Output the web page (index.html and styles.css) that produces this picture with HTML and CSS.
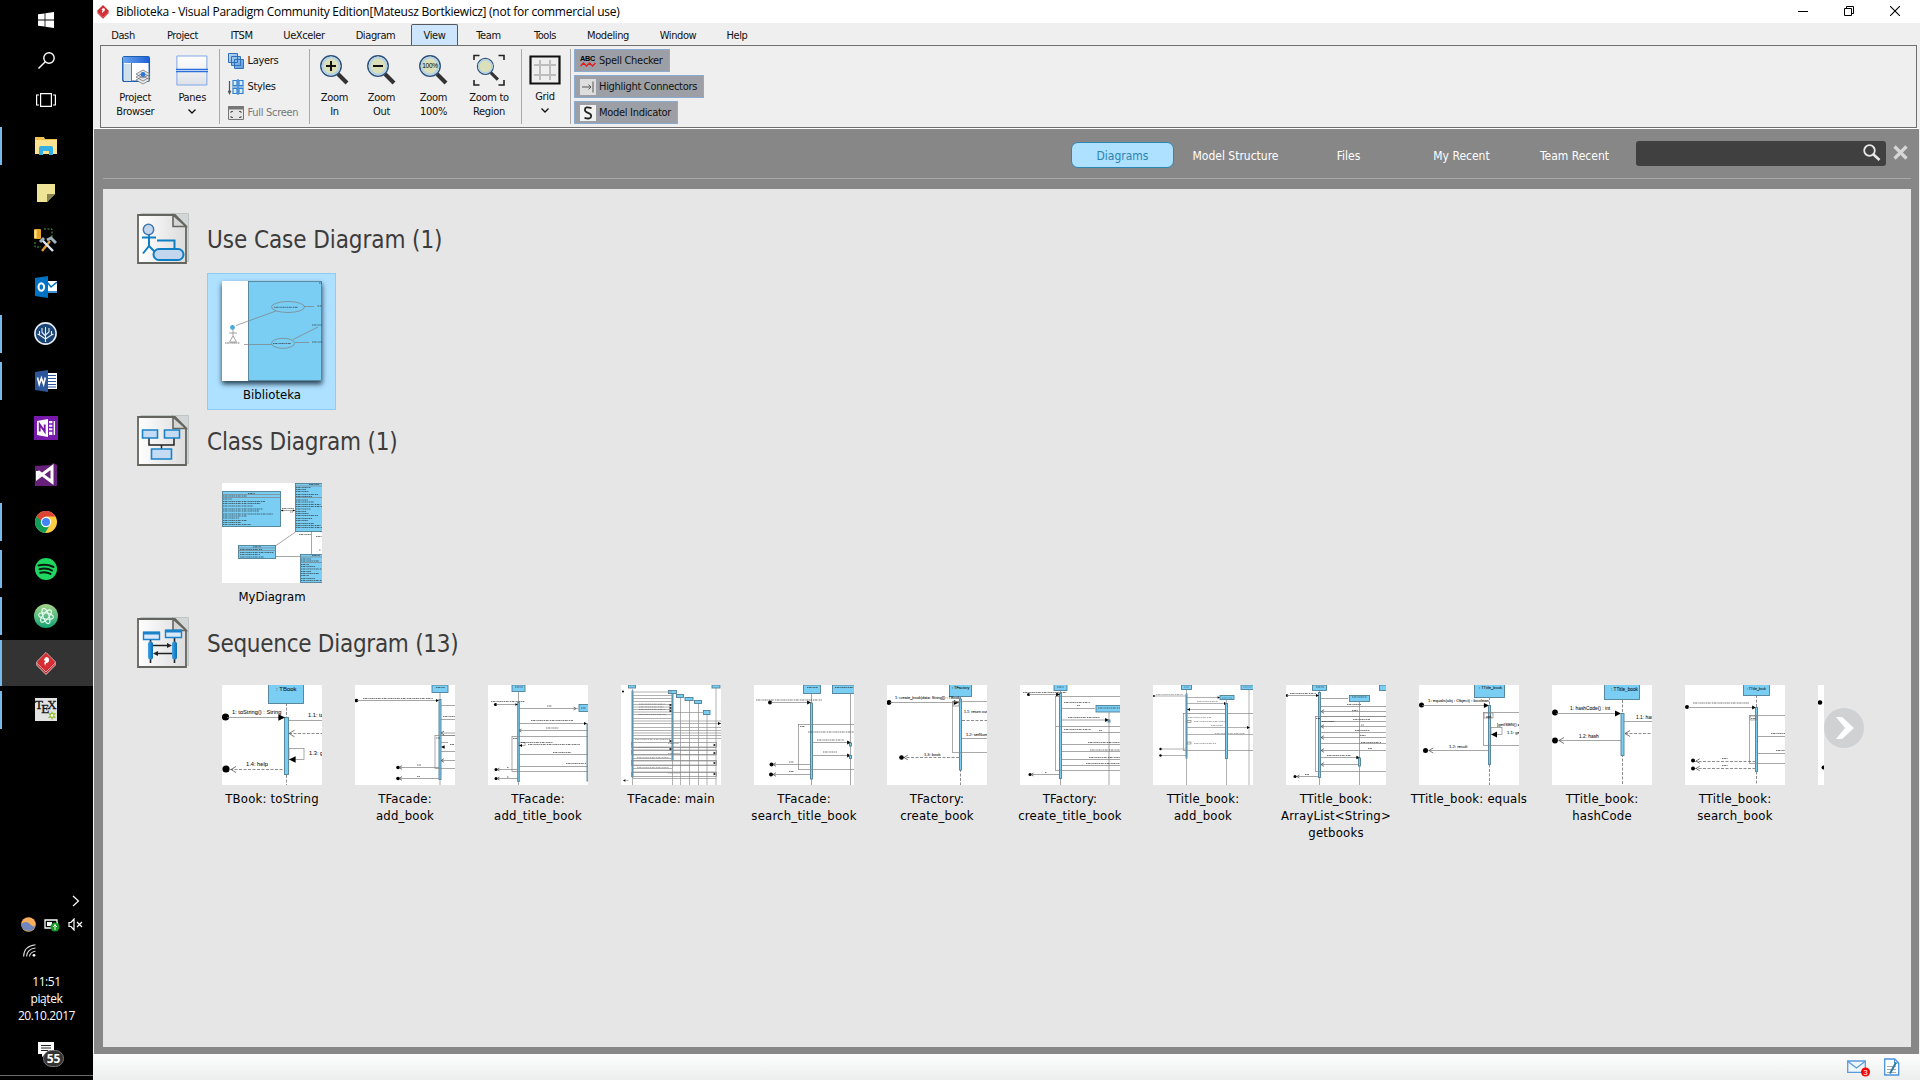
FILE: index.html
```html
<!DOCTYPE html>
<html lang="en">
<head>
<meta charset="utf-8">
<title>Biblioteka - Visual Paradigm</title>
<link rel="stylesheet" href="styles.css">
</head>
<body>
<svg class="defs" width="0" height="0">
  <defs>
    <linearGradient id="page" x1="0" x2="1"><stop offset="0" stop-color="#fff"/><stop offset="1" stop-color="#dcdcdc"/></linearGradient>
    <linearGradient id="pane" x1="0" y1="0" x2="0" y2="1"><stop offset="0" stop-color="#fff"/><stop offset="1" stop-color="#dde1e8"/></linearGradient>
    <linearGradient id="blue" x1="0" x2="1"><stop offset="0" stop-color="#6aa6ee"/><stop offset="1" stop-color="#1f62d8"/></linearGradient>
    <linearGradient id="layer" x1="0" y1="0" x2="1" y2="1"><stop offset="0" stop-color="#b9d8f5"/><stop offset="1" stop-color="#5a9be0"/></linearGradient>
    <linearGradient id="atomg" x1="0" y1="0" x2="0" y2="1"><stop offset="0" stop-color="#a6d68c"/><stop offset="1" stop-color="#12a374"/></linearGradient>
    <linearGradient id="bar" x1="0" x2="1"><stop offset="0" stop-color="#3fa3e4"/><stop offset="1" stop-color="#0a6cb4"/></linearGradient>
    <symbol id="vp" viewBox="0 0 24 26">
      <path d="M12 1 22 11v4L12 25 2 15v-4Z" fill="#c9252b" stroke="#e8d8d8" stroke-width="1"/>
      <path d="M2.500 13 12 22.300 21.500 13" fill="none" stroke="#f1b5b5" stroke-width="1"/>
      <path d="M12 1.500 21.500 11 12 20.500 2.500 11Z" fill="#d32f35"/>
      <path d="M12 6a3.300 3.300 0 1 1 0 6.600l-1 2.900-1-3.500 1.500-1.500L9.500 9Z" fill="#fff"/>
    </symbol>
    <symbol id="lens" viewBox="0 0 32 32">
      <path d="m19 20 9 9" stroke="#333" stroke-width="4"/>
      <circle cx="12" cy="12" r="10.200" fill="#dce0b8" stroke="#2d5078" stroke-width="1.500"/>
      <circle cx="12" cy="12" r="8.500" fill="none" stroke="#b3d2ea" stroke-width="2"/>
    </symbol>
    <symbol id="sheet" viewBox="0 0 52 52">
      <path d="M4 .5h47.500v48H4Z" fill="#d3d6d6" stroke="#bfc4c4"/>
      <path d="M1 2h37l11 11v37H1Z" fill="url(#page)" stroke="#65655f" stroke-width="1.800"/>
      <path d="M36 2v11.500h13Z" fill="#d5d5d5" stroke="#65655f" stroke-width="1.600"/>
    </symbol>
  </defs>
</svg>

<div class="desktop">
  <aside class="taskbar">
    <div class="tb-top">
      <div class="sys"><svg width="16" height="16" viewBox="0 0 16 16" fill="#fff"><path d="M0 2.300 6.600 1.400v6.200H0ZM7.400 1.300 16 0v7.600H7.400ZM0 8.400h6.600v6.200L0 13.700ZM7.400 8.400H16V16l-8.600-1.300Z"/></svg></div>
      <div class="sys"><svg width="17" height="17" viewBox="0 0 17 17" fill="none" stroke="#fff" stroke-width="1.400"><circle cx="11" cy="6" r="5.200"/><path d="M7.300 9.700.5 16.500"/></svg></div>
      <div class="sys"><svg width="20" height="16" viewBox="0 0 20 16" fill="none" stroke="#fff" stroke-width="1.200"><path d="M4.600 1.600h10.800v12.800H4.600ZM3 3H.6v10H3M17 3h2.400v10H17"/></svg></div>
    </div>
    <div class="app open"><svg width="22" height="20" viewBox="0 0 22 20"><path d="M0 1h9l1 2h12v15H0Z" fill="#f2c14e"/><path d="M0 4h22v14H0Z" fill="#fee391"/><path d="M4 19v-7q0-2 2-2h10q2 0 2 2v7h-4v-4H8v4Z" fill="#35b0e4"/></svg></div>
    <div class="app"><svg width="18" height="18" viewBox="0 0 18 18"><path d="M0 0h18v10l-8 8H0Z" fill="#efe395"/><path d="M10 10h8l-8 8Z" fill="#8a8350"/></svg></div>
    <div class="app"><svg width="23" height="24" viewBox="0 0 23 24"><rect width="7" height="10" y="1" rx="1" fill="#e9a72a"/><path d="M1.500 2v8" stroke="#ffe6a0" stroke-width="2"/><path d="M10 1h8v8M1 14v5h6" fill="none" stroke="#46a83f" stroke-dasharray="2 1.500"/><path d="m8 23 8-10" stroke="#dd9b30" stroke-width="2.400"/><path d="m8 12 11 11" stroke="#dfe6ee" stroke-width="2.400"/><path d="m13 12 4-2 5 5M6 14l4-4" fill="none" stroke="#9fb0bf" stroke-width="3"/></svg></div>
    <div class="app"><svg width="22" height="22" viewBox="0 0 22 22"><path d="M12 5h10v12H12Z" fill="#fff"/><path d="m12 6 4 5 6-5M13 16h9" fill="none" stroke="#0072c6" stroke-width="1.500"/><path d="M0 2 13 0v22L0 20Z" fill="#0072c6"/><ellipse cx="6.300" cy="11" rx="2.800" ry="3.800" fill="none" stroke="#fff" stroke-width="2"/></svg></div>
    <div class="app open"><svg width="23" height="23" viewBox="0 0 23 23"><circle cx="11.500" cy="11.500" r="10.600" fill="#1b4577" stroke="#e8eef5" stroke-width="1.600"/><path d="M11.500 20V5M11.500 17 5.500 13V9M11.500 14 8 10.500V6M11.500 17l6-4V9M11.500 13l3.500-3V6M5.500 13l-2-1M17.500 13l2-1" fill="none" stroke="#e8eef5" stroke-width="1.100"/></svg></div>
    <div class="app open"><svg width="22" height="22" viewBox="0 0 22 22"><path d="M12 3h10v16H12Z" fill="#fff"/><path d="M13 5.500h8M13 8.500h8M13 11.500h8M13 14.500h8M13 17h8" stroke="#2b579a"/><path d="M0 2 13 0v22L0 20Z" fill="#2b579a"/><path d="m2.500 7.500 1.700 7 2.200-6.500 2.200 6.500 1.700-7" fill="none" stroke="#fff" stroke-width="1.600"/></svg></div>
    <div class="app"><svg width="24" height="24" viewBox="0 0 24 24"><path d="M0 0h24v24H0Z" fill="#7719aa"/><path d="m3 5 11-2v18L3 19ZM15 5h6v14h-6Z" fill="#fff"/><path d="M5.700 15.500v-7l5 7v-7" fill="none" stroke="#7719aa" stroke-width="1.900"/><path d="M15 8h4M15 11.500h4M15 15h4M19 5v14" stroke="#7719aa" stroke-width="1.300"/></svg></div>
    <div class="app"><svg width="22" height="23" viewBox="0 0 22 23"><path d="M0 3 16 2l2-2 4 2v21H0Z" fill="#68217a"/><path d="M2.500 8v7L17 4v15L3 8.500M3 14.500l4-3" fill="none" stroke="#fff" stroke-width="3"/></svg></div>
    <div class="app open"><svg width="22" height="22" viewBox="0 0 22 22"><circle cx="11" cy="11" r="11" fill="#ffcd40"/><path d="M1.500 5.500A11 11 0 0 0 10 22l5.500-9H11Z" fill="#0f9d58"/><path d="M1.500 5.500A11 11 0 0 1 20.500 5.500H11L6 9.500Z" fill="#db4437"/><circle cx="11" cy="11" r="5.200" fill="#fff"/><circle cx="11" cy="11" r="4" fill="#4285f4"/></svg></div>
    <div class="app open"><svg width="22" height="22" viewBox="0 0 22 22"><circle cx="11" cy="11" r="11" fill="#1ed760"/><path d="M3.500 7.500q8-2.200 15 1.500M4.500 11.200q7-1.800 12.500 1.300M5.200 14.700q6-1.400 10.300 1.200" fill="none" stroke="#0b1a10" stroke-width="2" stroke-linecap="round"/></svg></div>
    <div class="app open"><svg width="24" height="24" viewBox="0 0 24 24"><circle cx="12" cy="12" r="12" fill="url(#atomg)"/><g fill="none" stroke="#e9fff4" stroke-width="1"><ellipse cx="12" cy="12" rx="3" ry="8" transform="rotate(-20 12 12)"/><ellipse cx="12" cy="12" rx="3" ry="7.500" transform="rotate(40 12 12)"/><ellipse cx="12" cy="12" rx="3" ry="7.500" transform="rotate(100 12 12)"/></g></svg></div>
    <div class="app open active"><svg width="22" height="25"><use href="#vp"/></svg></div>
    <div class="app open"><svg class="spill" width="22" height="23" viewBox="0 0 22 23"><path d="M0 0h22v23H0Z" fill="#e3e3e3"/><g font-family="Liberation Serif, serif" font-size="13" fill="#111" stroke="#111" stroke-width=".3"><text x="0" y="11">T</text><text x="6.300" y="14.500">E</text><text x="12.300" y="11">X</text></g><path d="m17 13 1 2.500 3-.5-2 2.500 2 2.500-3-.5-1 2.500-1-2.500-3 .5 2-2.500-2-2.500 3 .5Z" fill="#86b817"/><circle cx="17" cy="17.500" r="1.400" fill="#fff"/></svg></div>

    <div class="tray">
      <div class="tray-more"><svg width="8" height="12" viewBox="0 0 8 12" fill="none" stroke="#fff" stroke-width="1.200"><path d="m1 1 5.500 5L1 11"/></svg></div>
      <div class="tray-row">
        <svg width="15" height="15" viewBox="0 0 15 15"><circle cx="7.500" cy="7.500" r="7.300" fill="#f6b05c"/><path d="M.3 7q5-4 9 .5 2 2 5 2A7.300 7.300 0 0 1 .3 7Z" fill="#6f87bd"/></svg>
        <svg width="16" height="14" viewBox="0 0 16 14"><path d="M1 2h12v8H1ZM13.500 4.500v3" fill="none" stroke="#fff" stroke-width="1.300"/><path d="M3 4h5v4H3Z" fill="#fff"/><circle cx="11" cy="9" r="4.500" fill="#159a22"/><path d="M11 6v6M9 9l2-2 2 2" fill="none" stroke="#fff"/></svg>
        <svg width="15" height="13" viewBox="0 0 15 13" fill="none" stroke="#fff" stroke-width="1.200"><path d="M1 4.500h2l3-3.500v11L3 8.500H1Z"/><path d="m9 4 5 5M14 4 9 9"/></svg>
      </div>
      <div class="tray-wifi"><svg width="13" height="13" viewBox="0 0 13 13" fill="none" stroke="#ddd" stroke-width="1.100"><path d="M.6 12.500Q1 2 12.500.8M3.500 12.500Q4 5 12.500 4M6.500 12.500Q7 8 12.500 7.200"/><circle cx="11" cy="11.300" r="1.400" fill="#fff" stroke="none"/></svg></div>
      <div class="clock"><span>11:51</span><span>piątek</span><span>20.10.2017</span></div>
      <div class="notes"><svg width="16" height="15" viewBox="0 0 16 15"><path d="M0 0h16v12H8l-4 3v-3H0Z" fill="#fff"/><path d="M3 3.500h10M3 6h10M3 8.500h7" stroke="#222"/></svg><b class="count">55</b></div>
    </div>
  </aside>

  <main class="window">
    <header class="titlebar">
      <svg width="14" height="16"><use href="#vp"/></svg>
      <h1>Biblioteka - Visual Paradigm Community Edition[Mateusz Bortkiewicz] (not for commercial use)</h1>
      <div class="controls">
        <svg width="10" height="10" viewBox="0 0 10 10"><path d="M0 5.500h10" stroke="#000"/></svg>
        <svg width="10" height="10" viewBox="0 0 10 10" fill="none" stroke="#000"><path d="M.5 2.500h7v7h-7ZM2.500 2.500v-2h7v7h-2"/></svg>
        <svg width="10" height="10" viewBox="0 0 10 10" fill="none" stroke="#000" stroke-width="1.100"><path d="m0 0 10 10M10 0 0 10"/></svg>
      </div>
    </header>

    <nav class="menu">
      <span>Dash</span><span>Project</span><span>ITSM</span><span>UeXceler</span><span>Diagram</span><span class="current">View</span><span>Team</span><span>Tools</span><span>Modeling</span><span>Window</span><span>Help</span>
    </nav>

    <section class="ribbon">
      <div class="group panels">
        <div class="tool"><svg width="32" height="32" viewBox="0 0 32 32"><rect x="3.800" y="2.800" width="26.500" height="24.500" rx="1.500" fill="#fff" stroke="#1d5fae" stroke-width="1.500"/><path d="M4 3h26v6H4Z" fill="url(#blue)"/><path d="M5 10h7v17H5Z" fill="#cfe0ea"/><path d="M12.500 9v18.500" stroke="#5d7c8c"/><path d="m17 26 7-4 7 4-7 4ZM17 23l7-4 7 4-7 4ZM17 20l7-4 7 4-7 4Z" fill="#e6e8ea" stroke="#777" stroke-width=".8"/><circle cx="24" cy="20.500" r="2.400" fill="#2c77d8"/></svg><span>Project<br>Browser</span></div>
        <div class="tool"><svg width="32" height="32" viewBox="0 0 32 32"><g fill="url(#pane)" stroke="#7fa6e8"><path d="M.9 2h30v13.500H.9ZM.9 17.500h30V31H.9Z"/></g><path d="M0 15.500h32M0 17.700h32" stroke="#2a6fdc" stroke-width="1.300"/></svg><span>Panes</span><svg class="chev" width="8" height="5" viewBox="0 0 8 5"><path d="m.5.500 3.500 3.500L7.500.5"/></svg></div>
      </div>
      <div class="group views">
        <div class="item"><svg width="16" height="16" viewBox="0 0 16 16" fill="url(#layer)" stroke="#2f70b8"><path d="M.5.500h9v9h-9ZM3.500 3.500h9v9h-9ZM6.500 6.500h9v9h-9Z"/></svg><span>Layers</span></div>
        <div class="item"><svg width="16" height="16" viewBox="0 0 16 16" fill="none" stroke="#2f80d0" stroke-width="1.200"><path d="M1.500 2v12M.200 11.800 1.500 14.500l1.300-2.700" stroke="#555"/><path d="M5 1.500h4v5H5ZM11 1.500h4v5h-4ZM5 9.500h4v5H5ZM11 9.500h4v5h-4Z" fill="#d9edfb"/><path d="M4 8h12M10 0v16"/></svg><span>Styles</span></div>
        <div class="item off"><svg width="16" height="14" viewBox="0 0 16 14" fill="none" stroke="#777"><path d="M.5.500h15v13H.5Z" fill="#e6e6e6"/><path d="M0 2h16" stroke-width="3"/><path d="M3 7V5.500h2M11 5.500h2V7M13 10v1.500h-2M5 11.500H3V10" stroke="#555"/></svg><span>Full Screen</span></div>
      </div>
      <div class="group zooms">
        <div class="tool"><svg width="32" height="32" viewBox="0 0 32 32"><use href="#lens"/><path d="M7 12h10M12 7v10" stroke="#111" stroke-width="2"/></svg><span>Zoom<br>In</span></div>
        <div class="tool"><svg width="32" height="32" viewBox="0 0 32 32"><use href="#lens"/><path d="M7 12h10" stroke="#111" stroke-width="2"/></svg><span>Zoom<br>Out</span></div>
        <div class="tool"><svg width="32" height="32" viewBox="0 0 32 32"><use href="#lens"/><text x="12" y="14.300" text-anchor="middle" font-family="Liberation Sans, sans-serif" font-size="6.500">100%</text></svg><span>Zoom<br>100%</span></div>
        <div class="tool"><svg width="32" height="32" viewBox="0 0 32 32"><use href="#lens" x="3" y="3" width="25" height="25"/><path d="M1 6V1.500h5.500M25.500 1.500H31V6M31 26v5h-5.500M6.500 31H1v-5" fill="none" stroke="#222" stroke-width="1.600"/></svg><span>Zoom to<br>Region</span></div>
      </div>
      <div class="group grid">
        <div class="tool"><svg width="32" height="30" viewBox="0 0 32 30"><path d="M1.500 1.500h29v27h-29Z" fill="#eee" stroke="#111" stroke-width="2.200"/><path d="M11 5v20M21 5v20M5 10h22M5 20h22" stroke="#bdbdbd" stroke-width="2"/></svg><span>Grid</span><svg class="chev" width="8" height="5" viewBox="0 0 8 5"><path d="m.5.500 3.500 3.500L7.500.5"/></svg></div>
      </div>
      <div class="toggles">
        <div class="toggle"><svg width="16" height="14" viewBox="0 0 16 14"><text x="0" y="7" font-family="Liberation Sans, sans-serif" font-weight="700" font-size="7" textLength="15" lengthAdjust="spacingAndGlyphs">ABC</text><path d="m.5 12 3-3 3 3 3-3 3 3 3-3" fill="none" stroke="#e02020" stroke-width="1.500"/></svg><span>Spell Checker</span></div>
        <div class="toggle"><svg width="16" height="16" viewBox="0 0 16 16"><path d="M0 0h16v16H0Z" fill="#dedede"/><path d="M2 8h9M8.500 5.500 11 8l-2.500 2.500M13 2.500v11" fill="none" stroke="#555"/></svg><span>Highlight Connectors</span></div>
        <div class="toggle"><svg width="16" height="16" viewBox="0 0 16 16"><path d="M0 0h16v16H0Z" fill="#f2f2f2"/><path d="M11.500 3.200Q5 1 4.900 4.700q0 2.100 3.100 3.100 3.400 1.100 3.200 3.400-.4 3.500-6.700 1.700" fill="none" stroke="#222" stroke-width="1.800"/></svg><span>Model Indicator</span></div>
      </div>
    </section>

    <section class="explorer">
      <div class="filters">
        <div class="tabs"><span class="on">Diagrams</span><span>Model Structure</span><span>Files</span><span>My Recent</span><span>Team Recent</span></div>
        <div class="search"><svg width="18" height="17" viewBox="0 0 18 17" fill="none" stroke="#e8e8e8"><circle cx="6.500" cy="6.500" r="5.300" stroke-width="1.800"/><path d="m10.500 10.500 6 5.500" stroke-width="2.600"/></svg></div>
        <svg class="close" width="15" height="15" viewBox="0 0 15 15" stroke="#d6d6d6" stroke-width="3.200"><path d="m1.500 1.500 12 12M13.500 1.500l-12 12"/></svg>
      </div>

      <div class="board">
        <section class="kind">
          <h2><svg width="52" height="52" viewBox="0 0 52 52"><use href="#sheet"/><g fill="none" stroke="#0f7fc4" stroke-width="2"><path d="M5 24.500h14M12 22v11l-6 7.500M12 33l6 6M20 27.500h17.500V36"/><circle cx="11.500" cy="16.500" r="5.200" fill="#c2d7ef" stroke="#4479a8" stroke-width="1.500"/><rect x="16.500" y="36" width="30" height="11" rx="5.500" fill="#c2d7ef"/></g></svg><span class="wide">Use Case Diagram (1)</span></h2>
          <div class="cards">
            <figure class="card selected"><svg class="thumb" data-diagram="usecase" viewBox="0 0 100 100"></svg><figcaption>Biblioteka</figcaption></figure>
          </div>
        </section>
        <section class="kind">
          <h2><svg width="52" height="52" viewBox="0 0 52 52"><use href="#sheet"/><path d="M12 23v7h25v-7M24.500 30v4" fill="none" stroke="#222" stroke-width="1.500"/><path d="M5.500 15h15v8h-15ZM27.500 15h15v8h-15ZM14.500 34h20v10h-20Z" fill="#c5dbf3" stroke="#1982c8" stroke-width="1.600"/></svg><span>Class Diagram (1)</span></h2>
          <div class="cards">
            <figure class="card"><svg class="thumb" data-diagram="classes" viewBox="0 0 100 100"></svg><figcaption>MyDiagram</figcaption></figure>
          </div>
        </section>
        <section class="kind">
          <h2><svg width="52" height="52" viewBox="0 0 52 52"><use href="#sheet"/><path d="M13.500 23v23M37.500 21v25" stroke="#222" stroke-width="1.600"/><path d="M6.500 15.500h16v7h-16ZM28.500 13.500h16v7h-16Z" fill="#d9e8f8" stroke="#1982c8" stroke-width="1.400"/><path d="M6 14.500h17v3H6ZM28 12.500h17v3H28Z" fill="#1982c8"/><rect x="11" y="24.500" width="5" height="18" rx="2.500" fill="url(#bar)"/><rect x="35" y="24.500" width="5" height="18" rx="2.500" fill="url(#bar)"/><path d="M16 28.500h15M20 36.500h15" stroke="#222" stroke-width="1.500"/><path d="m30 26 5 2.500-5 2.500ZM21 34l-5 2.500 5 2.500Z" fill="#222"/></svg><span class="tight">Sequence Diagram (13)</span></h2>
          <div class="strip">
            <div class="cards">
              <figure class="card"><svg class="thumb" data-diagram="toString" viewBox="0 0 100 100"></svg><figcaption>TBook: toString</figcaption></figure>
              <figure class="card"><svg class="thumb" data-diagram="addBook" viewBox="0 0 100 100"></svg><figcaption>TFacade:<br>add_book</figcaption></figure>
              <figure class="card"><svg class="thumb" data-diagram="addTitle" viewBox="0 0 100 100"></svg><figcaption>TFacade:<br>add_title_book</figcaption></figure>
              <figure class="card"><svg class="thumb dense" data-diagram="main" viewBox="0 0 100 100"></svg><figcaption>TFacade: main</figcaption></figure>
              <figure class="card"><svg class="thumb" data-diagram="searchTitle" viewBox="0 0 100 100"></svg><figcaption>TFacade:<br>search_title_book</figcaption></figure>
              <figure class="card"><svg class="thumb" data-diagram="createBook" viewBox="0 0 100 100"></svg><figcaption>TFactory:<br>create_book</figcaption></figure>
              <figure class="card"><svg class="thumb" data-diagram="createTitle" viewBox="0 0 100 100"></svg><figcaption>TFactory:<br>create_title_book</figcaption></figure>
              <figure class="card"><svg class="thumb dense" data-diagram="titleAdd" viewBox="0 0 100 100"></svg><figcaption>TTitle_book:<br>add_book</figcaption></figure>
              <figure class="card"><svg class="thumb" data-diagram="getbooks" viewBox="0 0 100 100"></svg><figcaption>TTitle_book:<br>ArrayList&lt;String&gt;<br>getbooks</figcaption></figure>
              <figure class="card"><svg class="thumb" data-diagram="equals" viewBox="0 0 100 100"></svg><figcaption>TTitle_book: equals</figcaption></figure>
              <figure class="card"><svg class="thumb" data-diagram="hashCode" viewBox="0 0 100 100"></svg><figcaption>TTitle_book:<br>hashCode</figcaption></figure>
              <figure class="card"><svg class="thumb" data-diagram="searchBook" viewBox="0 0 100 100"></svg><figcaption>TTitle_book:<br>search_book</figcaption></figure>
              <figure class="card"><svg class="thumb" data-diagram="next" viewBox="0 0 100 100"></svg></figure>
            </div>
            <svg class="forward" width="40" height="40" viewBox="0 0 40 40"><circle cx="20" cy="20" r="20" fill="#d0d1d3"/><path d="M12 9h6l12 11-12 11h-6l9-11Z" fill="#fff"/></svg>
          </div>
        </section>
      </div>
    </section>

    <footer class="status">
      <svg width="24" height="20" viewBox="0 0 24 20"><path d="M.7 3h17.600v11.300H.7Z" fill="#eef5fb" stroke="#5a9bdc" stroke-width="1.300"/><path d="m1 3.500 8.500 6.500L18 3.500" fill="none" stroke="#5a9bdc" stroke-width="1.300"/><circle cx="18.500" cy="14" r="4.500" fill="#f00"/><text x="18.500" y="17" text-anchor="middle" font-family="Liberation Sans, sans-serif" font-size="8" fill="#fff">3</text></svg>
      <svg width="16" height="18" viewBox="0 0 16 18"><path d="M.7 1h10l4 4v12H.7Z" fill="#fff" stroke="#4a93dd" stroke-width="1.300"/><path d="M10.500 1v4h4" fill="none" stroke="#4a93dd"/><path d="M3 8.500h9M3 11.500h9M3 14.500h9" stroke="#aaa"/><path d="m6 15.500 6-11" stroke="#2a7f9e" stroke-width="2"/></svg>
    </footer>
  </main>
</div>
<script src="diagrams.js"></script>
</body>
</html>
```
FILE: styles.css
```css
* { box-sizing: border-box; }
body {
  margin: 0;
  overflow: hidden;
  background: #000;
  color: #111;
  font-family: "DejaVu Sans Condensed", "DejaVu Sans", sans-serif;
  font-stretch: condensed;
  font-size: 11px;
}
h1, h2, figure { margin: 0; font-weight: 400; }
svg { display: block; flex: none; }
.spill { overflow: visible; }
.defs { position: absolute; }
.desktop { display: flex; width: 1920px; height: 1080px; }

/* Taskbar */
.taskbar { display: flex; flex-direction: column; width: 93px; background: #000; color: #fff; }
.tb-top { height: 122px; flex: none; }
.sys { display: flex; align-items: center; justify-content: center; height: 40px; width: 92px; }
.app { display: flex; align-items: center; justify-content: center; height: 47px; flex: none; position: relative; padding-right: 2px; }
.app.open::before { content: ""; position: absolute; left: 0; top: 5px; width: 2px; height: 38px; background: #76b9ed; }
.app.active { height: 46px; margin-top: 1px; background: #333; }
.app.active::before { top: 0; height: 46px; }
.tray { margin-top: auto; height: 186px; margin-bottom: 4px; border-bottom: 1px solid #6b6b6b; font-family: "Open Sans", sans-serif; font-stretch: normal; }
.tray-more { display: flex; justify-content: flex-end; padding: 5px 13px 0 0; }
.tray-row { display: flex; align-items: center; gap: 8px; padding: 9px 0 0 21px; height: 26px; }
.tray-wifi { padding: 11px 0 0 23px; }
.clock { display: flex; flex-direction: column; align-items: center; margin-top: 16px; font-size: 12px; line-height: 17px; letter-spacing: -.4px; }
.notes { position: relative; margin: 18px 0 0 38px; width: 26px; height: 28px; }
.count { position: absolute; left: 5px; top: 8px; width: 21px; height: 17px; border: 1px solid #777; border-radius: 9px; background: #333; font-size: 12px; line-height: 15px; text-align: center; }

/* Window frame */
.window { flex: 1; display: flex; flex-direction: column; background: #efefef; border-left: 1px solid #f4f4f4; min-width: 0; }
.titlebar { display: flex; align-items: center; height: 23px; background: #fff; padding-left: 2px; }
.titlebar h1 { margin: 1px 0 0 6px; font: 12px "Open Sans", sans-serif; line-height: 20px; letter-spacing: -.255px; color: #000; }
.controls { display: flex; gap: 36px; margin: -2px 20px 0 auto; }
.menu { display: grid; grid-template-columns: 54px 65px 53px 72px 71px 47px 61px 52px 74px 66px 52px; height: 22px; padding: 1px 0 0 2px; letter-spacing: -.4px; }
.menu span { display: flex; align-items: center; justify-content: center; padding-top: 2px; }
.menu .current { background: #cde6fd; border: 1px solid #55595e; border-bottom: 0; border-radius: 2px 2px 0 0; padding-top: 1px; }

/* Ribbon */
.ribbon { display: flex; height: 83px; margin: 0 3px 0 6px; padding: 3px 0; border: 1px solid #6f6f6f; letter-spacing: -.3px; }
.group { display: flex; border-right: 1px solid #a9a9a9; height: 75px; }
.tool { display: flex; flex-direction: column; align-items: center; text-align: center; line-height: 14px; padding-top: 5px; }
.tool span { margin-top: 5px; }
.chev { fill: none; stroke: #111; stroke-width: 1.300; margin-top: 4px; }
.panels { width: 119px; padding-left: 6px; }
.panels .tool { width: 58px; }
.panels .tool + .tool { width: 55px; margin-left: 2px; }
.views { width: 90px; flex-direction: column; padding-left: 8px; }
.item { display: flex; flex: none; align-items: center; gap: 3px; height: 26px; padding-bottom: 3px; }
.item.off { color: #777; }
.item span { margin-left: .5px; }
.zooms { width: 212px; padding-left: 1px; }
.zooms .tool { width: 47px; }
.zooms .tool:nth-child(3) { width: 57px; }
.zooms .tool:nth-child(4) { width: 54px; }
.grid { width: 49px; }
.grid .tool { width: 46px; padding-top: 6px; }
.toggles { display: flex; flex-direction: column; align-items: flex-start; gap: 3px; padding-left: 3px; }
.toggle { display: flex; align-items: center; gap: 3px; height: 23px; padding: 0 6px 0 5px; background: #9ca0a6; border: 1px solid #8cabd0; }

/* Explorer */
.explorer { height: 925px; margin: 1px 1px 0 0; padding: 0 8px 7px 9px; background: #878787; box-shadow: 0 -1px #fff; }
.filters { display: flex; align-items: flex-start; justify-content: flex-end; height: 50px; padding: 12px 3px 0 0; border-bottom: 1px solid #a8a8a8; }
.tabs { display: flex; gap: 10px; margin: 1px 10px 0 0; font-size: 12px; color: #fff; }
.tabs span { display: flex; align-items: center; justify-content: center; width: 103px; height: 26px; padding-top: 1px; white-space: nowrap; }
.tabs .on { background: #aee0ff; color: #2b84ae; border: 1px solid #2e86b4; border-radius: 7px; }
.search { display: flex; align-items: flex-start; justify-content: flex-end; width: 250px; height: 25px; padding: 3px 5px 0 0; border-radius: 3px; background: #404040; }
.close { margin: 4px 0 0 7px; }
.board { height: 858px; margin-top: 10px; padding: 22px 0 0 34px; background: #e6e6e6; }
.kind { height: 202px; }
.kind h2 { display: flex; align-items: center; gap: 18px; height: 56px; padding-bottom: 2px; font-size: 24px; letter-spacing: -.2px; color: #3c3c3c; }
.kind h2 svg { margin-top: 2px; }
.kind h2 span { padding-top: 4px; }
.kind h2 .wide { letter-spacing: -.08px; }
.kind h2 .tight { letter-spacing: -.28px; }
.cards { display: flex; gap: 4px; margin: 6px 0 0 70px; overflow: hidden; width: 1617px; }
.card { flex: none; width: 129px; min-height: 137px; padding: 7px 0 0 14px; border: 1px solid transparent; }
.thumb { width: 100px; height: 100px; background: #fff; overflow: hidden; }
.card figcaption { margin: 5px 0 0 -13px; text-align: center; font-size: 13px; line-height: 17px; white-space: nowrap; color: #000; }
.strip figcaption { letter-spacing: .2px; }
.selected { background: #aee0ff; border-color: #8fcdf0; }
.selected .thumb { box-shadow: 0 3px 5px #223c50; }
.strip { display: flex; }
.forward { margin: 37px 0 0 0; }

/* Diagram previews */
.thumb .box { fill: #7acdf3; stroke: #4f7f96; stroke-width: .9; }
.thumb .line { stroke: #808080; stroke-width: .7; fill: none; }
.thumb .dash { stroke: #707070; stroke-width: .8; stroke-dasharray: 3 1.500; }
.thumb .frame { stroke: #858585; stroke-width: .7; fill: none; }
.thumb .ink { stroke: #222; stroke-width: 1; stroke-dasharray: 1.500 .6 2.200 .5 .8 .7; opacity: .6; }
.dense .ink { opacity: .35; }
.dense .line { stroke: #8f8f8f; }
.thumb .dot, .thumb .head { fill: #000; }
.thumb .open { fill: none; stroke: #555; stroke-width: .8; }
.thumb text { font-family: "Liberation Sans", sans-serif; font-stretch: normal; fill: #111; stroke: #222; stroke-width: .06; }

/* Status bar */
.status { display: flex; flex: 1; justify-content: flex-end; gap: 13px; padding: 4px 20px 0 0; background: linear-gradient(#fdfdfd, #ecefee); }
```
FILE: diagrams.js
```js
// Preview drawings, one command per entry:
// b box, l line, d dashed line, f frame, o dot, r/w filled arrow head right/left,
// c open arrow head left, k tiny caption, t text, e ellipse
const lines = (ys, x1, x2) => ys.map(y => `l ${x1} ${y} ${x2} ${y}`).join(";");
const inks = rows => rows.map(r => `k ${r.join(" ")}`).join(";");
const rowsOfInk = (x, ys, ws) => ys.map((y, i) => `k ${x} ${y} ${ws[i % ws.length]}`).join(";");

const diagrams = {
  usecase: "b 26.500 .5 73 99;k 97 2 3;e 66 26 16.500 5.500;k 52 26.300 24;l 82 25.500 92 25.500;k 95.500 25 4;l 14 44.500 54 30;o 10.500 46.500 2.400 #4aa9dc;l 11 49 11 55;l 7 52 15 52;l 11 55 7.500 61;l 11 55 14.500 61;l 7.500 61 14.500 61;k 3 62 15;l 22 63.500 50 63.500;e 61 62.300 11.500 5;k 51 62.500 18;l 71 58.500 96 46;l 73 61.500 87 61.500;k 90 44 10;k 90 61 10",
  classes: "b .5 8.500 58 35;l 0 11.500 58 11.500;l 0 14.500 58 14.500;k 26 10.500 7;" + rowsOfInk(1, [13, 16, 18.500, 20.500, 23, 26, 28, 31, 33, 35, 37.500, 39.500, 41.500], [24, 9, 42, 38, 30, 40, 36, 50, 24, 16, 24, 18, 28]) +
    ";b 73.500 .5 30 48;l 73 3 100 3;l 73 14.500 100 14.500;k 87 1.500 10;" + rowsOfInk(74, [4.500, 6.500, 8.500, 11.500, 13.500, 17, 19, 21.500, 23.500, 26, 28.500, 30.500, 32.500, 35.500, 37.500, 40.500, 42.500, 44.500], [15, 10, 13, 22, 16, 12, 18, 25, 26]) +
    ";l 59 27.500 73 27.500;w 59 27.500 .7;r 73 27.500 .7;k 60 25.500 12;k 68 29 3;b 16.500 62.500 37 13;l 16 65 53 65;l 16 67.500 53 67.500;k 31 63.800 8;" + rowsOfInk(18, [66.500, 69.500, 71.500, 74], [22, 34, 20, 24]) +
    ";l 54 62.500 73.500 49;l 54 73.500 78 73.500;l 89.500 49 89.500 71;k 77 51.500 12;k 94 53.500 6;k 97 67 2;b 78.500 71.500 30 28;l 78 74 100 74;l 78 79.500 100 79.500;k 90 72.500 8;" + rowsOfInk(79, [76, 78, 81.500, 83.500, 86, 88.500, 90.500, 92.500, 95.500, 97.500], [10, 18, 8, 14, 21]),
  toString: "d 64.500 18 64.500 100;b 46.500 -1 35 19.500;t 54 6 6 : TBook;b 62.500 32.500 4 57;o 3.500 32 3.600;l 5 32.500 60 32.500;r 63 32.500 2.200;t 10 28.500 5.700 1: toString() : String;l 67 35.500 100 35.500;t 86 32 5.700 1.1: toString;d 67 48.500 100 48.500;c 67 48.500 2.200;f 67 63.500 15 11;w 67 74.500 2.200;t 87 70 5.700 1.3: get;d 8 84.500 62 84.500;c 9 84.500 2;o 4 84 3.600;t 24 80.500 5.700 1.4: help",
  addBook: "l 85 8 85 100;b 77 0 16 7.500;k 81 2.500 9;b 84 14.500 2 80;o 1.500 15.500 1.800;l 2 15.500 83 15.500;r 84 15.500 1;k 8 13.500 70;l 86 20.500 100 20.500;l 86 34.500 100 34.500;k 88 31.500 12;l 86 48 100 48;c 86 48 1.200;l 86 50.500 100 50.500;f 80 50.500 25 33;k 81 53 4;l 86 57.500 93 57.500;k 95 59.500 4;w 86 62 1.200;l 86 66.500 100 66.500;l 86 75.500 100 75.500;c 86 75.500 1.200;l 43 82.500 84 82.500;o 43 82.500 1.800;c 44 82.500 1.200;k 62 80 4;l 43 93.500 84 93.500;o 43 93.500 1.800;c 44 93.500 1.200;k 62 91.500 3",
  addTitle: "l 30.500 7 30.500 100;b 24 0 13 6.500;k 27 2 8;b 29.700 17.500 1.600 79;o 7.500 19.500 1.600;l 8 19.500 30 19.500;r 30 19.500 .9;k 3 16.500 34;l 31 23.500 90 23.500;c 88 23.500 -1;k 59 21 5;b 91 19.500 12 7;k 93 23 5;b 99 39 3 57;l 31 38.500 98 38.500;r 99 38.500 1;k 43 35.500 42;l 31 45.500 100 45.500;c 31 45.500 1;k 58 43 13;f 24 51.500 80 35;k 25 53.500 4;f 31 57.500 6 3;k 33 57.500 32;k 40 59.500 52;w 31 60.500 1;l 31 69.500 100 69.500;k 65 67.500 18;l 31 81.500 100 81.500;k 78 78.500 20;l 9 84.500 30 84.500;o 8 84.500 1.500;c 9 84.500 1;k 19 82.500 2;l 9 93.500 30 93.500;o 8 93.500 1.500;c 9 93.500 1;k 19 92 2",
  main: "l 11.500 4 11.500 100;l 51.500 8 51.500 100;l 59.500 13 59.500 100;l 68.500 15 68.500 100;l 77.500 18 77.500 100;l 86 29 86 100;l 95 3 95 100;b 7.500 0 7 3;b 91 0 8 3;b 47.500 5.500 8 3;b 55.500 9.500 7 3;b 64 12.500 8 3;b 73.500 15.500 7 3;b 82.500 25.500 6.500 4;b 11 6 1 86;b 51 9 1 66;o 2 6.500 1;" + lines([7, 10.500, 13.500, 16.500, 19.500, 22, 24.500, 27, 29.500, 33.500, 73.500, 83.500], 12, 51) + ";" + lines([36, 38.500, 42.500, 45.500, 48, 50.500, 53.500], 12, 100) + ";" + lines([62, 65, 70, 76, 80, 87, 93.500], 12, 95) +
    ";l 52 27.500 83 27.500;" + inks([[18, 19, 26], [18, 22, 25], [18, 24.500, 26], [17, 29.500, 28], [14, 54.500, 35], [15, 62.500, 32], [16, 72.500, 32], [16, 82.500, 32], [47, 58.500, 11], [47, 68.500, 12], [47, 88, 12]]) + ";f 10.500 57.500 85 5;f 10.500 65.500 85 4;f 10.500 75.500 85 5;f 10.500 87.500 85 4;w 2 95.500 .8;k 3 95.500 5;r 95 60 .8;r 95 68 .8;r 95 78 .8;r 95 89 .8;r 51 20 .8;r 51 23 .8;r 51 26 .8;r 51 56 .8;r 51 64 .8;r 100 38.500 1",
  searchTitle: "l 57.500 8 57.500 100;l 96.500 8 96.500 100;b 49.500 0 17 8.500;k 53 2.500 11;b 78.500 0 30 8.500;k 81 2.500 19;b 56.500 18 2 76;o 16 17.500 2;l 17 17.500 55 17.500;r 57 17.500 1.300;k 2 15 66;f 44.500 39.500 60 45;k 46 41.500 5;k 54 47 46;l 59 57.500 95 57.500;r 97 57.500 1.300;k 63 55 27;b 95.500 58 2 3;l 59 70.500 95 70.500;r 97 70.500 1.300;k 69 67 14;b 95.500 70.500 2 3;l 18 79.500 56 79.500;o 17.500 79.500 2;c 19 79.500 1.200;k 35 77 5;l 18 89.500 56 89.500;o 17 89.500 2;c 19 89.500 1.200;k 35 86.500 5",
  createBook: "d 73.500 12 73.500 100;b 62.500 -1 22 12.500;t 65 4 3.900 : TFactory;o 2 17.500 2.400;l 3 17.500 70 17.500;r 72 17.500 1.700;t 8 14 3.900 1: create_book(data: String[]) : TBook;b 72.500 14 2 71;f 65.500 16.500 45 51;f 66 17 6 4;t 77 28 3.700 1.1: return ourself;d 75 35.500 100 35.500;l 75 53.500 100 53.500;t 79 51 4 1.2: setNumber;d 15 72.500 72 72.500;o 14.500 72.500 2.300;c 17 72.500 1.500;t 37 70.500 4 1.3: book",
  createTitle: "l 40.500 6 40.500 100;l 89 27 89 100;b 34 -1 13 6.500;k 37 2 7;b 39.500 8.500 2 85;o 8.500 9.500 1.500;l 9 9.500 39 9.500;r 40 9.500 1.300;k 3 7.500 44;f 35.500 11.500 75 74;l 41 23.500 75 23.500;k 44 17.500 26;k 57 20.500 3;b 76 20.500 30 6.500;k 78 23 22;l 42 35 88 35;r 89 35 1.300;k 48 32.500 32;b 88 35 2 2;l 36 41.500 100 41.500;k 44 44.500 27;k 79 45.500 3;l 42 47.500 100 47.500;" + lines([59.500, 66.500, 74.500, 80.500], 42, 100) + ";k 68 57.500 32;k 70 65 30;k 69 72.500 31;k 66 78.500 34;l 10 89.500 39 89.500;o 10 89.500 1.500;c 11 89.500 1;k 25 87.500 2",
  titleAdd: "l 33.500 5 33.500 100;l 73.500 15 73.500 100;l 96 5 96 100;b 28.500 0 10 4.500;b 88 0 15 4.500;k 90 2 9;k 31 2 5;b 33 9 1 64;b 67 10.500 14 4;k 69 13 10;o 1 11 1;l 1 11 33 11;k 3 9.500 27;l 34 12.500 66 12.500;r 67 12.500 .8;l 34 18.500 73 18.500;r 74 18.500 1;k 44 16.500 21;l 34 24.500 73 24.500;w 34 24.500 1;f 30.500 28.500 75 37;k 35 32.500 23;f 34 35.500 4 2;k 41 36.500 33;l 34 42.500 95 42.500;r 97 42.500 1;k 58 40.500 12;l 34 49.500 100 49.500;k 62 48.500 30;b 72.500 18.500 2 55;f 34 57 4 2;k 41 58.500 22;l 7 64 33 64;o 7.500 64 1.200;l 7 70.500 33 70.500;o 7.500 70.500 1.200",
  getbooks: "l 33.500 5 33.500 100;l 73.500 17 73.500 100;b 26.500 0 14 5.500;k 30 2 8;b 93.500 0 15 5.500;b 32.500 7.500 2 85;o 1 10.500 1.300;l 1 10.500 33 10.500;r 33 10.500 1;k 4 8.500 26;l 34 13.500 62 13.500;b 63.500 10.500 20 6;k 66 12 15;" + lines([21.500, 26.500, 31.500, 36.500, 41.500, 47.500, 52.500, 58.500, 65.500], 34, 100) + ";c 35 26.500 1.200;c 35 41.500 1.200;c 35 52.500 1.200;c 35 65.500 1.200;k 61 19.500 14;k 66 25.500 6;k 36 36.500 13;k 67 34.500 17;k 75 40 3;k 69 45.500 15;k 74 50.500 6;k 75 57.500 20;k 82 63.500 4;f 29.500 31.500 75 55;k 30 33.500 4;l 34 72.500 73 72.500;r 74 72.500 1.200;k 41 70.500 24;b 72.500 73 2 8;l 34 79.500 73 79.500;c 35 79.500 1.200;l 9 91.500 33 91.500;o 9 91.500 1.500;c 11 91.500 1;k 19 89.500 4",
  equals: "d 70.500 12 70.500 100;b 55.500 -1 30 13.500;t 60 4 4 : TTitle_book;o 2.500 20 2.500;l 3 20.500 67 20.500;r 70 20.500 1.700;t 9 17.300 4.300 1: equals(obj : Object) : boolean;b 69.500 20.500 2 59;f 64.500 27.500 45 33;f 65 28 9 5;t 67 32.500 3.900 opt;t 78 40.500 4.200 [getISBN() ==;f 72 42.500 11 7;w 72 49.500 2;t 88 48.500 4.200 1.1: get;l 8 65.500 70 65.500;o 6.500 65.500 2.500;c 10 65.500 1.700;t 30 63.300 4.200 1.2: result",
  hashCode: "d 70.500 15 70.500 100;b 52.500 -1 35 15.500;t 59 5.500 4.700 : TTitle_book;o 3 27.500 2.900;l 4 28.500 67 28.500;r 69 28.500 2;t 18 24.500 4.900 1: hashCode() : int;b 69 28.500 3 42;l 72 36.500 100 36.500;t 84 33.500 4.900 1.1: hash;d 73 48.500 100 48.500;c 73 48.500 2;l 6 55.500 69 55.500;o 3 55.500 2.900;c 7 55.500 2;t 27 53.300 4.800 1.2: hash",
  searchBook: "d 71.500 10 71.500 100;b 58.500 -1 26 11.500;t 62 4.500 3.300 : TTitle_book;o 2 22 2;l 3 22.500 70 22.500;r 71 22.500 1.300;k 8 18 56;b 70.500 22.500 2 64;f 64.500 30.500 45 48;f 65 31 7 4;k 66 33.500 5;l 73 51.500 100 51.500;k 86 48.500 14;l 73 68.500 100 68.500;k 91 65.500 9;d 9 76.500 70 76.500;o 8 75.500 2;c 11 76 1.500;k 37 73.500 6;d 9 83.500 70 83.500;o 8 83.500 2;c 11 83.500 1.500;k 37 80.500 6",
  next: "o 2 17.500 2.300;o 5.500 82.500 2"
};

function shape(command) {
  const [kind, ...rest] = command.trim().split(" ");
  const [a, b, c, d] = rest.map(Number);
  switch (kind) {
    case "b": return `<rect class="box" x="${a}" y="${b}" width="${c}" height="${d}"/>`;
    case "f": return `<rect class="frame" x="${a}" y="${b}" width="${c}" height="${d}"/>`;
    case "l": return `<path class="line" d="M${a} ${b}L${c} ${d}"/>`;
    case "d": return `<path class="dash" d="M${a} ${b}L${c} ${d}"/>`;
    case "k": return `<path class="ink" d="M${a} ${b}h${c}"/>`;
    case "o": return `<circle class="dot" cx="${a}" cy="${b}" r="${c}"${rest[3] ? ` style="fill:${rest[3]}"` : ""}/>`;
    case "e": return `<ellipse class="line" cx="${a}" cy="${b}" rx="${c}" ry="${d}"/>`;
    case "r": return `<path class="head" d="M${a} ${b}l${-3 * c} ${-1.5 * c}v${3 * c}Z"/>`;
    case "w": return `<path class="head" d="M${a} ${b}l${3 * c} ${-1.5 * c}v${3 * c}Z"/>`;
    case "c": return `<path class="open" d="M${a + 2.5 * c} ${b - 1.5 * c}L${a} ${b}l${2.5 * c} ${1.5 * c}"/>`;
    case "t": return `<text x="${a}" y="${b}" font-size="${c}">${rest.slice(3).join(" ")}</text>`;
  }
  return "";
}

document.querySelectorAll("[data-diagram]").forEach(svg => {
  svg.innerHTML = diagrams[svg.dataset.diagram].split(";").map(shape).join("");
});
```
